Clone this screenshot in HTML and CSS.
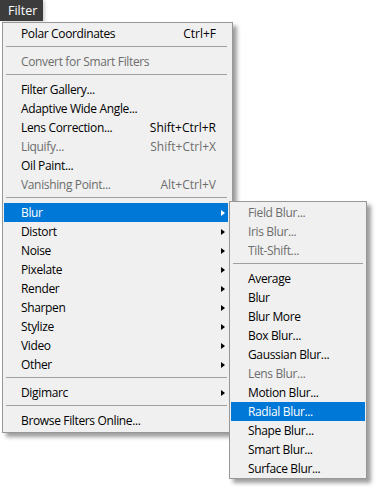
FILE: index.html
```html
<!DOCTYPE html>
<html>
<head>
<meta charset="utf-8">
<link rel="stylesheet" href="styles.css">
</head>
<body>
<div class="menubar"><span class="menubar-item">Filter</span></div>
<div class="menu-area">
  <div class="menu main">
    <div class="item"><span class="label">Polar Coordinates</span><span class="key">Ctrl+F</span><span></span></div>
    <div class="sep"></div>
    <div class="item disabled"><span class="label">Convert for Smart Filters</span><span class="key"></span><span></span></div>
    <div class="sep"></div>
    <div class="item"><span class="label">Filter Gallery...</span><span class="key"></span><span></span></div>
    <div class="item"><span class="label">Adaptive Wide Angle...</span><span class="key"></span><span></span></div>
    <div class="item"><span class="label">Lens Correction...</span><span class="key">Shift+Ctrl+R</span><span></span></div>
    <div class="item disabled"><span class="label">Liquify...</span><span class="key">Shift+Ctrl+X</span><span></span></div>
    <div class="item"><span class="label">Oil Paint...</span><span class="key"></span><span></span></div>
    <div class="item disabled"><span class="label">Vanishing Point...</span><span class="key">Alt+Ctrl+V</span><span></span></div>
    <div class="sep"></div>
    <div class="item active"><span class="label">Blur</span><span class="key"></span><span class="arrow"></span></div>
    <div class="item"><span class="label">Distort</span><span class="key"></span><span class="arrow"></span></div>
    <div class="item"><span class="label">Noise</span><span class="key"></span><span class="arrow"></span></div>
    <div class="item"><span class="label">Pixelate</span><span class="key"></span><span class="arrow"></span></div>
    <div class="item"><span class="label">Render</span><span class="key"></span><span class="arrow"></span></div>
    <div class="item"><span class="label">Sharpen</span><span class="key"></span><span class="arrow"></span></div>
    <div class="item"><span class="label">Stylize</span><span class="key"></span><span class="arrow"></span></div>
    <div class="item"><span class="label">Video</span><span class="key"></span><span class="arrow"></span></div>
    <div class="item"><span class="label">Other</span><span class="key"></span><span class="arrow"></span></div>
    <div class="sep"></div>
    <div class="item"><span class="label">Digimarc</span><span class="key"></span><span class="arrow"></span></div>
    <div class="sep"></div>
    <div class="item"><span class="label">Browse Filters Online...</span><span class="key"></span><span></span></div>
  </div>
  <div class="menu sub">
    <div class="item disabled"><span class="label">Field Blur...</span></div>
    <div class="item disabled"><span class="label">Iris Blur...</span></div>
    <div class="item disabled"><span class="label">Tilt-Shift...</span></div>
    <div class="sep"></div>
    <div class="item"><span class="label">Average</span></div>
    <div class="item"><span class="label">Blur</span></div>
    <div class="item"><span class="label">Blur More</span></div>
    <div class="item"><span class="label">Box Blur...</span></div>
    <div class="item"><span class="label">Gaussian Blur...</span></div>
    <div class="item disabled"><span class="label">Lens Blur...</span></div>
    <div class="item"><span class="label">Motion Blur...</span></div>
    <div class="item active"><span class="label">Radial Blur...</span></div>
    <div class="item"><span class="label">Shape Blur...</span></div>
    <div class="item"><span class="label">Smart Blur...</span></div>
    <div class="item"><span class="label">Surface Blur...</span></div>
  </div>
</div>
</body>
</html>
```
FILE: styles.css
```css
html, body {
  margin: 0;
  padding: 0;
  background: #ffffff;
}
body {
  min-height: 491px;
  font-family: "Open Sans", "Noto Sans", sans-serif;
  font-size: 12px;
  letter-spacing: -0.35px;
  color: #000000;
}
.menubar {
  height: 22px;
  display: flex;
}
.menubar-item {
  display: flex;
  align-items: center;
  width: 43px;
  height: 21px;
  box-sizing: border-box;
  padding-left: 8px;
  font-size: 12.5px;
  letter-spacing: 0;
  background: #3c3c3c;
  color: #ffffff;
  box-shadow: 2px 1px 3px rgba(0, 0, 0, 0.18);
}
.menu-area {
  position: relative;
  padding-left: 2px;
  min-height: 469px;
}
.menu {
  background: #f0f0f0;
  border: 1px solid #979797;
  box-sizing: border-box;
  box-shadow: 4px 4px 4px rgba(0, 0, 0, 0.38);
}
.main {
  width: 231px;
  padding: 1px 4px 2px 1px;
}
.sub {
  position: absolute;
  left: 229px;
  top: 179px;
  width: 138px;
  padding: 1px 1px 0 1px;
}
.item {
  height: 19px;
  display: grid;
  grid-template-columns: 1fr auto 12px;
  align-items: center;
  padding-left: 17px;
  white-space: nowrap;
  line-height: 19px;
}
.sub .item {
  grid-template-columns: 1fr;
}
.item.disabled {
  color: #6d6d6d;
}
.item.active {
  background: #0078d7;
  color: #ffffff;
}
.key {
  text-align: right;
  letter-spacing: 0;
}
.arrow {
  width: 0;
  height: 0;
  margin-left: 5px;
  border-top: 3.5px solid transparent;
  border-bottom: 3.5px solid transparent;
  border-left: 4px solid #000000;
}
.item.active .arrow {
  border-left-color: #ffffff;
}
.sep {
  height: 1px;
  background: #a0a0a0;
  margin: 3px 1px 5px 2px;
}
.sub .sep {
  margin: 3px 2px 5px 2px;
}
```
